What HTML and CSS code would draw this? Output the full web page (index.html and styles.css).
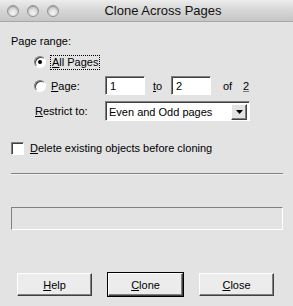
FILE: index.html
```html
<!DOCTYPE html>
<html>
<head>
    <meta charset="UTF-8">
    <title>Clone Across Pages</title>
    <link rel="stylesheet" href="styles.css">
</head>
<body>
    <div class="window">
        <div class="titlebar">
            <div class="lights">
                <span class="light"></span>
                <span class="light"></span>
                <span class="light"></span>
            </div>
            <div class="title">Clone Across Pages</div>
        </div>

        <div class="dialog">
            <div class="group-label">Page range:</div>

            <div class="row row-all">
                <span class="radio checked"></span>
                <span class="focus-label"><u>A</u>ll Pages</span>
            </div>

            <div class="row row-page">
                <span class="radio"></span>
                <span class="page-label"><u>P</u>age:</span>
                <span class="field">1</span>
                <span class="to-label"><u>t</u>o</span>
                <span class="field">2</span>
                <span class="of-label">of</span>
                <span class="of-count">2</span>
            </div>

            <div class="row row-restrict">
                <span class="restrict-label"><u>R</u>estrict to:</span>
                <div class="select">
                    <span class="select-text">Even and Odd pages</span>
                    <span class="select-btn">
                        <svg width="7" height="4" viewBox="0 0 7 4"><path d="M0 0h7L3.5 4z" fill="#000"/></svg>
                    </span>
                </div>
            </div>

            <div class="row row-check">
                <span class="checkbox"></span>
                <span><u>D</u>elete existing objects before cloning</span>
            </div>

            <div class="separator"></div>

            <div class="progress"></div>

            <div class="buttons">
                <button class="btn"><u>H</u>elp</button>
                <button class="btn default"><u>C</u>lone</button>
                <button class="btn"><u>C</u>lose</button>
            </div>
        </div>
    </div>
</body>
</html>
```

FILE: styles.css
```css
html, body {
    margin: 0;
    padding: 0;
}
body {
    width: 293px;
    height: 306px;
    overflow: hidden;
    background: #e3e3e3;
    font-family: "Liberation Sans", Arial, sans-serif;
    font-size: 11px;
    color: #000;
}
.window {
    height: 306px;
    background: #e3e3e3;
}
.titlebar {
    height: 22px;
    display: flex;
    align-items: center;
    background: linear-gradient(#ececec, #d6d6d6 50%, #c6c6c6);
    border-bottom: 1px solid #a8a8a8;
    box-sizing: border-box;
}
.lights {
    display: flex;
    gap: 8px;
    padding-left: 7px;
}
.light {
    width: 12px;
    height: 12px;
    border-radius: 50%;
    box-sizing: border-box;
    border: 1px solid #939393;
    background: radial-gradient(circle at 50% 70%, #f6f6f6 0%, #dcdcdc 45%, #b0b0b0 100%);
    box-shadow: inset 0 1px 1px rgba(0,0,0,0.2);
}
.title {
    flex: 1;
    text-align: center;
    font-size: 13px;
    color: #111;
    padding-right: 26px;
}
.dialog {
    padding: 0 10px 0 11px;
}
.group-label {
    margin-top: 13px;
    height: 13px;
    line-height: 13px;
}
.row {
    display: flex;
    align-items: center;
}
.row-all {
    margin-top: 7px;
    height: 14px;
    padding-left: 23px;
}
.row-page {
    margin-top: 7px;
    height: 19px;
    padding-left: 23px;
}
.row-restrict {
    margin-top: 6px;
    height: 20px;
    padding-left: 24px;
}
.row-check {
    margin-top: 20px;
    height: 14px;
}
.radio {
    width: 12px;
    height: 12px;
    box-sizing: border-box;
    border-radius: 50%;
    border: 1px solid;
    border-color: #808080 #ffffff #ffffff #808080;
    background: #fff;
    box-shadow: inset 1px 1px 0 #404040;
    margin-right: 5px;
    display: flex;
    align-items: center;
    justify-content: center;
}
.radio.checked::after {
    content: "";
    width: 4px;
    height: 4px;
    border-radius: 50%;
    background: #000;
}
.focus-label {
    outline: 1px dotted #000;
    outline-offset: 0;
    padding: 0 1px;
    line-height: 13px;
}
.page-label {
    width: 54px;
}
.field {
    width: 40px;
    height: 19px;
    box-sizing: border-box;
    border: 1px solid;
    border-color: #808080 #ffffff #ffffff #808080;
    box-shadow: inset 1px 1px 0 #404040;
    background: #fff;
    padding: 2px 0 0 4px;
    line-height: 15px;
}
.to-label {
    width: 18px;
    padding-left: 8px;
}
.of-label {
    padding-left: 12px;
    width: 20px;
}
.of-count {
    text-decoration: underline;
    text-decoration-color: #777;
}
.restrict-label {
    width: 70px;
}
.select {
    width: 145px;
    height: 20px;
    box-sizing: border-box;
    border: 1px solid;
    border-color: #808080 #ffffff #ffffff #808080;
    box-shadow: inset 1px 1px 0 #404040;
    background: #fff;
    display: flex;
    align-items: center;
    padding: 2px 2px 1px 3px;
}
.select-text {
    flex: 1;
}
.select-btn {
    width: 16px;
    height: 16px;
    box-sizing: border-box;
    background: #e3e3e3;
    border: 1px solid;
    border-color: #ffffff #404040 #404040 #ffffff;
    box-shadow: inset -1px -1px 0 #808080;
    display: flex;
    align-items: center;
    justify-content: center;
}
.checkbox {
    width: 13px;
    height: 13px;
    box-sizing: border-box;
    border: 1px solid;
    border-color: #808080 #ffffff #ffffff #808080;
    box-shadow: inset 1px 1px 0 #404040;
    background: #fff;
    margin-right: 6px;
}
.separator {
    margin-top: 18px;
    height: 1px;
    background: #808080;
    border-bottom: 1px solid #f4f4f4;
}
.progress {
    margin-top: 32px;
    height: 23px;
    box-sizing: border-box;
    border: 1px solid;
    border-color: #808080 #ffffff #ffffff #808080;
}
.buttons {
    display: flex;
    gap: 16px;
    margin-top: 43px;
    padding-left: 6px;
}
.btn {
    width: 75px;
    height: 23px;
    box-sizing: border-box;
    font-family: "Liberation Sans", Arial, sans-serif;
    font-size: 11px;
    color: #000;
    background: #ececec;
    border: 1px solid;
    border-color: #ffffff #404040 #404040 #ffffff;
    box-shadow: inset -1px -1px 0 #808080;
    padding: 0;
}
.btn.default {
    outline: 1px solid #000;
}
```
